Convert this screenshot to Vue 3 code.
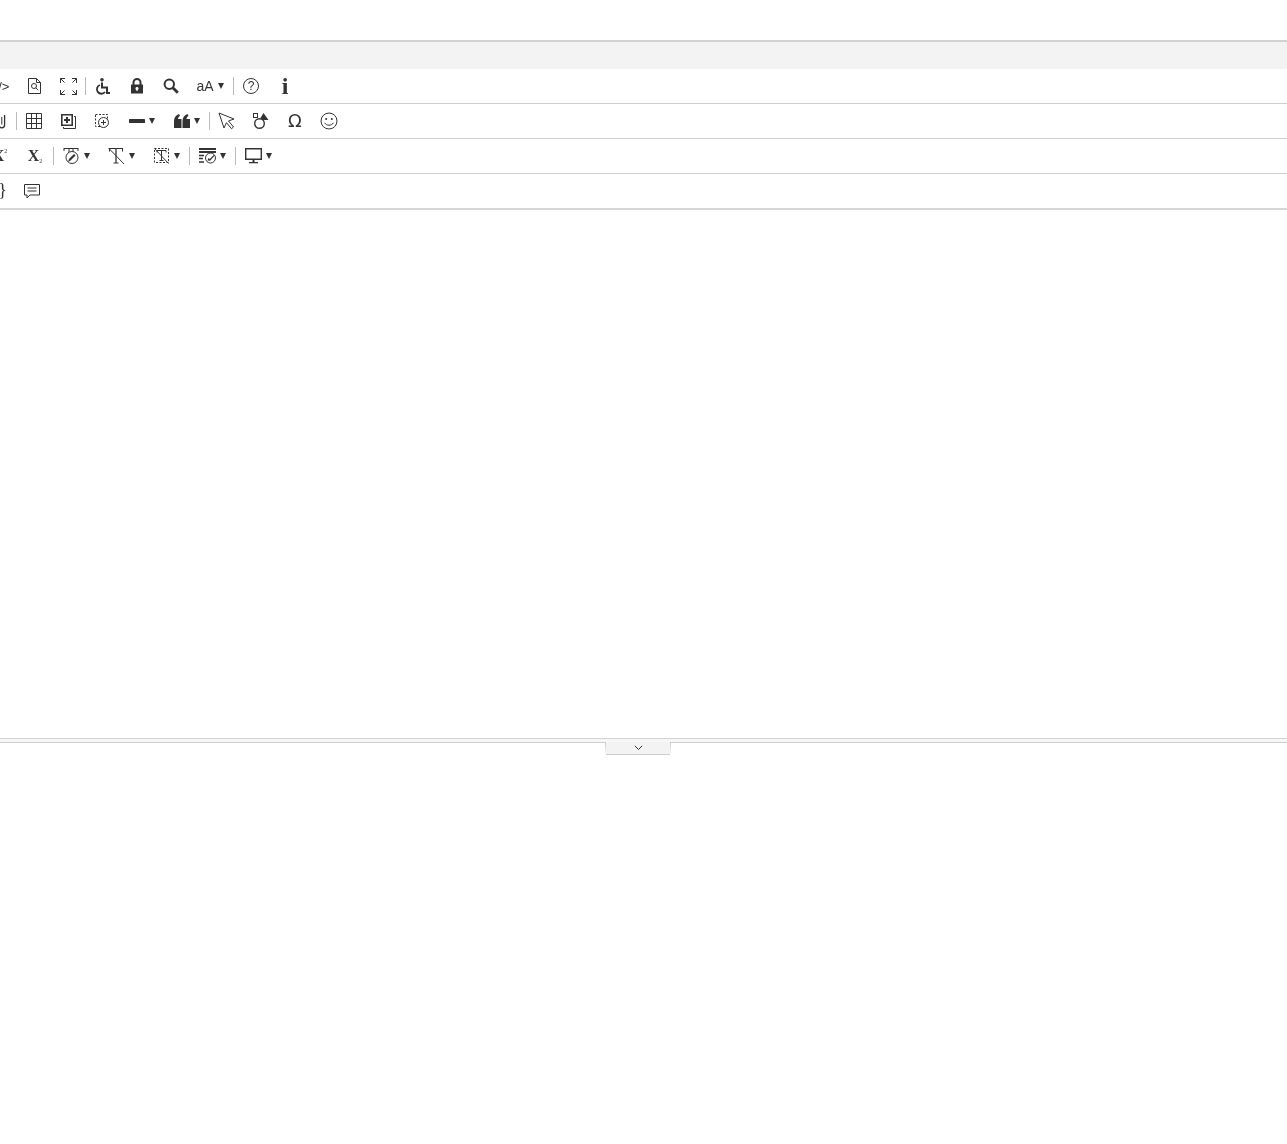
<script setup>
</script>

<template>
  <div class="page">
    <div class="editor">
      <div class="band"></div>
      <div class="row r1">
        <div class="btn"><span class="txt code">&lt;/&gt;</span></div>
        <div class="btn"><svg width="13" height="16" viewBox="0 0 13 16"><path d="M.5.500h8l4 4v11H.5z M8.500.500v4h4" class="line"/><circle cx="6" cy="8" r="2.500" class="line"/><path d="M7.800 9.800l2.500 2.500" class="line"/></svg></div>
        <div class="btn"><svg width="17" height="17" viewBox="0 0 17 17"><path d="M.5 5V.5H5M.5.500l4 4M12 .5h4.500V5M16.500.500l-4 4M.5 12v4.500H5M.5 16.500l4-4M16.500 12v4.500H12M16.500 16.500l-4-4" class="line"/></svg></div>
        <i class="sep"></i>
        <div class="btn"><svg width="16" height="17" viewBox="0 0 16 17"><circle cx="7" cy="1.800" r="1.800" class="fill"/><path d="M7 4.500V9.500h5v5.500h3" class="thick"/><path d="M5 7a4.500 4.500 0 1 0 5 7" class="thick2"/></svg></div>
        <div class="btn"><svg width="14" height="16" viewBox="0 0 14 16"><path d="M3.500 7V4.500a3.500 3.500 0 0 1 7 0V7" class="thick"/><path d="M1.500 6.500h11a.500.500 0 0 1 .500.500v8.500H1V7a.500.500 0 0 1 .500-.500zM7 9a1.500 1.500 0 0 0-.600 2.900V13h1.200v-1.100A1.500 1.500 0 0 0 7 9z" class="fill" fill-rule="evenodd"/></svg></div>
        <div class="btn"><svg width="16" height="16" viewBox="0 0 16 16"><circle cx="6.300" cy="6.300" r="4.700" class="thick"/><path d="M9.800 9.800l5 5" class="thick3"/></svg></div>
        <div class="btn drop aa-btn"><span class="aa">aA</span><b class="caret"></b></div>
        <i class="sep"></i>
        <div class="btn"><svg width="18" height="18" viewBox="0 0 18 18"><circle cx="9" cy="9" r="7.500" class="line"/><text x="9" y="13" class="q">?</text></svg></div>
        <div class="btn"><span class="info">i</span></div>
      </div>
      <div class="row r2">
        <div class="btn"><svg width="12" height="18" viewBox="0 0 12 18"><path d="M6 2.500v10.500a2.800 2.800 0 0 0 5.600 0V3" class="line2"/><path d="M8.800 5v7.500" class="line"/></svg></div>
        <i class="sep"></i>
        <div class="btn"><svg width="16" height="16" viewBox="0 0 16 16"><path d="M.5.500h15v15H.5zM5.500.500v15M10.500.500v15M.5 5.500h15M.5 10.500h15" class="line"/></svg></div>
        <div class="btn"><svg width="15" height="15" viewBox="0 0 15 15"><path d="M.8.800h10.400v10.400H.8z" class="mid"/><path d="M13 2.500h1.500v12h-12V13" class="line"/><path d="M6 3v6M3 6h6" class="thick"/></svg></div>
        <div class="btn"><svg width="16" height="16" viewBox="0 0 16 16"><path d="M1.500 1.500h12v12h-12z" class="dash"/><circle cx="9.500" cy="9.500" r="5" class="line" fill="#fff"/><path d="M9.500 7v5M7 9.500h5" class="line"/></svg></div>
        <div class="btn drop"><svg width="16" height="16" viewBox="0 0 16 16"><rect x="0" y="6" width="16" height="4" rx=".5" class="fill"/></svg><b class="caret"></b></div>
        <div class="btn drop"><svg width="16" height="16" viewBox="0 0 16 16"><path d="M0 15V8C0 4.500 2.200 2 5 1l1 2C4.800 3.700 4.100 4.700 4 6h3.500v9zM8.500 15V8c0-3.500 2.200-6 5-7l1 2c-1.200.7-1.900 1.700-2 3H16v9z" class="fill"/></svg><b class="caret"></b></div>
        <i class="sep"></i>
        <div class="btn"><svg width="18" height="18" viewBox="0 0 18 18"><path d="M1 1l15 6-5.500 2 5 6-2 1.700-5-6L6 16z" class="line"/></svg></div>
        <div class="btn"><svg width="18" height="18" viewBox="0 0 18 18"><rect x="1.500" y="1.500" width="4" height="4" class="line"/><circle cx="7.500" cy="11.500" r="4.800" class="thin2"/><path d="M11.500 1l5 7h-6l-2-2z" class="fill"/></svg></div>
        <div class="btn"><span class="omega">Ω</span></div>
        <div class="btn"><svg width="18" height="18" viewBox="0 0 18 18"><circle cx="9" cy="9" r="8" class="line"/><circle cx="6.200" cy="7" r="1" class="fill"/><circle cx="11.800" cy="7" r="1" class="fill"/><path d="M4.800 10.800c1 3.200 7.400 3.200 8.400 0" class="line"/></svg></div>
      </div>
      <div class="row r3">
        <div class="btn slim first"><span class="scr">X<sup>2</sup></span></div>
        <div class="btn slim"><span class="scr">X<sub>2</sub></span></div>
        <i class="sep"></i>
        <div class="btn drop icon18"><svg width="18" height="18" viewBox="0 0 18 18"><path d="M1 1.500h14M1 1v3M15 1v3M6 1.500v5M10 1.500v5" class="line"/><circle cx="9" cy="10.500" r="6" class="line" fill="#fff"/><path d="M5 15l1-3 5-5 1.500 1.500-5 5z" class="fill"/></svg><b class="caret"></b></div>
        <div class="btn drop icon18"><svg width="18" height="18" viewBox="0 0 18 18"><path d="M1.500 1.500h13M1.500 1v3.500M14.500 1v3.500M5.500 16h5" class="line"/><path d="M8 1.500V16" class="line2"/><path d="M.5 1l15.500 16" class="line"/></svg><b class="caret"></b></div>
        <div class="btn drop icon18"><svg width="18" height="18" viewBox="0 0 18 18"><path d="M1.500 1.500h14v14h-14z" class="dash"/><path d="M4 3.500h9v2M4 3.500v2M8.500 3.500v10M6.500 13.500h4M1.500 1.500l14 15" class="line"/></svg><b class="caret"></b></div>
        <i class="sep"></i>
        <div class="btn drop icon18"><svg width="18" height="16" viewBox="0 0 18 16"><path d="M0 1h17M0 4h17" class="line3"/><path d="M0 7.500h5M0 10.500h4M0 14h5" class="line2"/><circle cx="11.500" cy="10" r="5" class="line" fill="#fff"/><path d="M8.500 12.500l1-2.500 1.200 1 4-4 .8.800-4.500 5z" class="fill"/></svg><b class="caret"></b></div>
        <i class="sep"></i>
        <div class="btn drop icon18"><svg width="18" height="16" viewBox="0 0 18 16"><path d="M.7.700h15.600v10.600H.7z" class="thin2"/><path d="M7.500 11.500h2v2.500h-2zM4 14h9v1.200H4z" class="fill"/></svg><b class="caret"></b></div>
      </div>
      <div class="row r4">
        <div class="btn last"><span class="brace">}</span></div>
        <div class="btn"><svg width="16" height="15" viewBox="0 0 16 15"><path d="M.5.500h15v10.500H6l-3 3v-3H.5zM3.500 4h9M3.500 7h9" class="line"/></svg></div>
      </div>
    </div>
    <div class="pane"></div>
    <div class="resizer"><div class="tab"><svg width="9" height="6" viewBox="0 0 9 6"><path d="M.8.8l3.700 3.700L8.200.8" class="chev"/></svg></div></div>
  </div>
</template>

<style>
html, body { margin: 0; background: #fff; }
</style>

<style scoped>
.page { height: 1144px; overflow: hidden; padding-top: 40px; box-sizing: border-box; font-family: "Liberation Sans", sans-serif; color: #333; }
.editor { border-top: 2px solid #d2d2d2; border-bottom: 2px solid #d6d6d6; }
.band { height: 27px; background: #f3f3f3; }
.row { height: 34px; display: flex; align-items: center; border-bottom: 1px solid #ccc; will-change: transform; }
.r4 { border-bottom: 0; }
.r1 { margin-left: -17px; }
.r2 { margin-left: -18px; }
.r3 { margin-left: -19px; }
.r4 { margin-left: -19px; }
.btn { width: 34px; height: 34px; flex: none; display: flex; align-items: center; justify-content: center; }
.slim { width: 36px; }
.first { padding-left: 2px; box-sizing: border-box; }
.drop { width: 45px; gap: 4px; justify-content: center; }
.icon18 { justify-content: flex-start; padding-left: 9px; gap: 3px; box-sizing: border-box; }
.aa-btn { padding-right: 2px; box-sizing: border-box; }
.sep { width: 1px; height: 18px; background: #bbb; flex: none; }
.caret { width: 0; height: 0; border-left: 3.500px solid transparent; border-right: 3.500px solid transparent; border-top: 6px solid #333; margin-right: -1px; }
svg { display: block; overflow: visible; }
.line { fill: none; stroke: #333; stroke-width: 1; }
.line[fill] { fill: #fff; }
.line2 { fill: none; stroke: #333; stroke-width: 1.300; }
.line3 { fill: none; stroke: #333; stroke-width: 1.800; }
.thin2 { fill: none; stroke: #333; stroke-width: 1.400; }
.mid { fill: none; stroke: #333; stroke-width: 1.600; }
.thick { fill: none; stroke: #333; stroke-width: 2; }
.thick2 { fill: none; stroke: #333; stroke-width: 1.800; }
.thick3 { fill: none; stroke: #333; stroke-width: 2.800; }
.dash { fill: none; stroke: #333; stroke-width: 1; stroke-dasharray: 2 1.500; }
.fill { fill: #333; }
.q { font: 12px "Liberation Sans", sans-serif; text-anchor: middle; fill: #333; }
.code { font-size: 13px; }
.aa { font-size: 14px; line-height: 16px; }
.info { font: bold 24px/1 "Liberation Serif", serif; }
.omega { font: 18px/1 "DejaVu Sans", sans-serif; }
.scr { font: bold 16px/1 "Liberation Serif", serif; display: inline-flex; align-items: flex-end; }
.scr sup { font-size: 6px; line-height: 1; align-self: flex-start; font-weight: normal; }
.scr sub { font-size: 6px; line-height: 1; font-weight: normal; vertical-align: baseline; }
.last { justify-content: flex-end; padding-right: 8px; box-sizing: border-box; }
.brace { font: 18px/1 "Liberation Serif", serif; margin-top: -2px; }
.pane { height: 528px; }
.resizer { border-top: 1px solid #d4d4d4; border-bottom: 1px solid #cfcfcf; height: 3px; background: #f6f6f6; position: relative; }
.tab { position: absolute; left: 605px; top: 3px; width: 66px; height: 13px; box-sizing: border-box; border: 1px solid #ccc; border-top: 0; background: #f3f3f3; clip-path: polygon(0 0, 100% 0, 98.500% 100%, 1.500% 100%); display: flex; justify-content: center; padding-top: 3px; }
.chev { fill: none; stroke: #333; stroke-width: 1; }
</style>
